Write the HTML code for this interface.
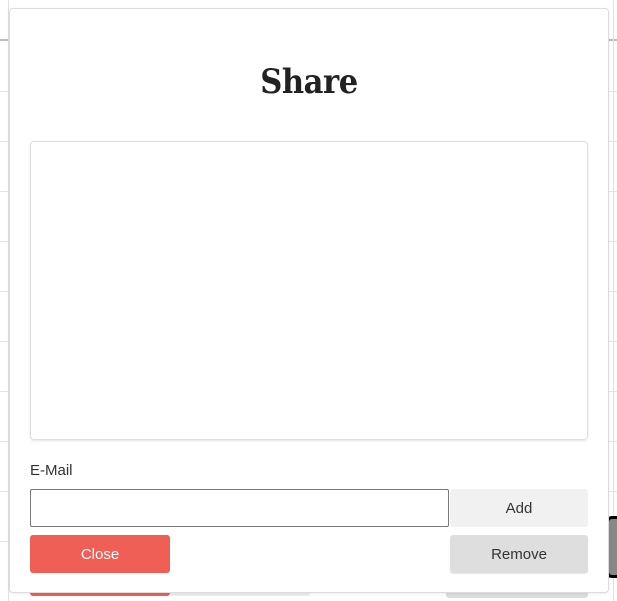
<!DOCTYPE html>
<html><head><style>
html,body{margin:0;padding:0;width:617px;height:601px;overflow:hidden;background:#fff;font-family:"Liberation Sans",sans-serif;position:relative}
.hl{position:absolute;left:0;width:617px;height:1px;background:#e4e4e4}
.vl{position:absolute;top:0;height:601px;width:1px;background:#e0e0e0}
.modal{position:absolute;left:9px;top:8px;width:598px;height:583px;background:#fff;border:1px solid #dcdcdc;border-radius:4px;box-shadow:0 1px 3px rgba(0,0,0,.08)}
h1{position:absolute;left:0;right:0;top:53px;margin:0;text-align:center;font-family:"DejaVu Serif","Liberation Serif",serif;font-weight:bold;font-size:34px;color:#222;letter-spacing:-0.5px;transform:scaleX(0.9)}
.box{position:absolute;left:20px;top:132px;width:556px;height:297px;border:1px solid #dedede;border-radius:4px;box-shadow:0 1px 2px rgba(0,0,0,.1)}
.lab{position:absolute;left:20px;top:453px;font-size:15px;color:#333}
.inp{position:absolute;left:20px;top:480px;width:417px;height:36px;border:1px solid #777;border-radius:2px}
.btn{position:absolute;border-radius:3px;font-size:15px;text-align:center;color:#333}
</style></head><body>
<div class="hl" style="top:39px;height:2px;background:#bbb"></div>
<div class="hl" style="top:91px"></div>
<div class="hl" style="top:141px"></div>
<div class="hl" style="top:191px"></div>
<div class="hl" style="top:241px"></div>
<div class="hl" style="top:291px"></div>
<div class="hl" style="top:341px"></div>
<div class="hl" style="top:391px"></div>
<div class="hl" style="top:441px"></div>
<div class="hl" style="top:491px"></div>
<div class="hl" style="top:541px"></div>
<div class="vl" style="left:8px"></div>
<div class="vl" style="left:613px"></div>
<div style="position:absolute;left:30px;top:586px;width:140px;height:10px;background:#ef5f55;border-radius:3px"></div>
<div style="position:absolute;left:170px;top:586px;width:140px;height:10px;background:#eee;border-radius:3px"></div>
<div style="position:absolute;left:446px;top:586px;width:142px;height:12px;background:#ddd;border-radius:3px"></div>
<div style="position:absolute;left:606px;top:516px;width:14px;height:56px;background:#888;border:3px solid #000;border-radius:6px"></div>
<div class="modal">
<h1>Share</h1>
<div class="box"></div>
<div class="lab">E-Mail</div>
<div class="inp"></div>
<div class="btn" style="left:440px;top:480px;width:138px;height:38px;line-height:40px;background:#f1f1f1">Add</div>
<div class="btn" style="left:20px;top:526px;width:140px;height:38px;line-height:40px;background:#ef5f55;color:#fff">Close</div>
<div class="btn" style="left:440px;top:526px;width:138px;height:38px;line-height:40px;background:#dedede;box-shadow:0 1px 1px rgba(0,0,0,.1)">Remove</div>
</div>
</body></html>
